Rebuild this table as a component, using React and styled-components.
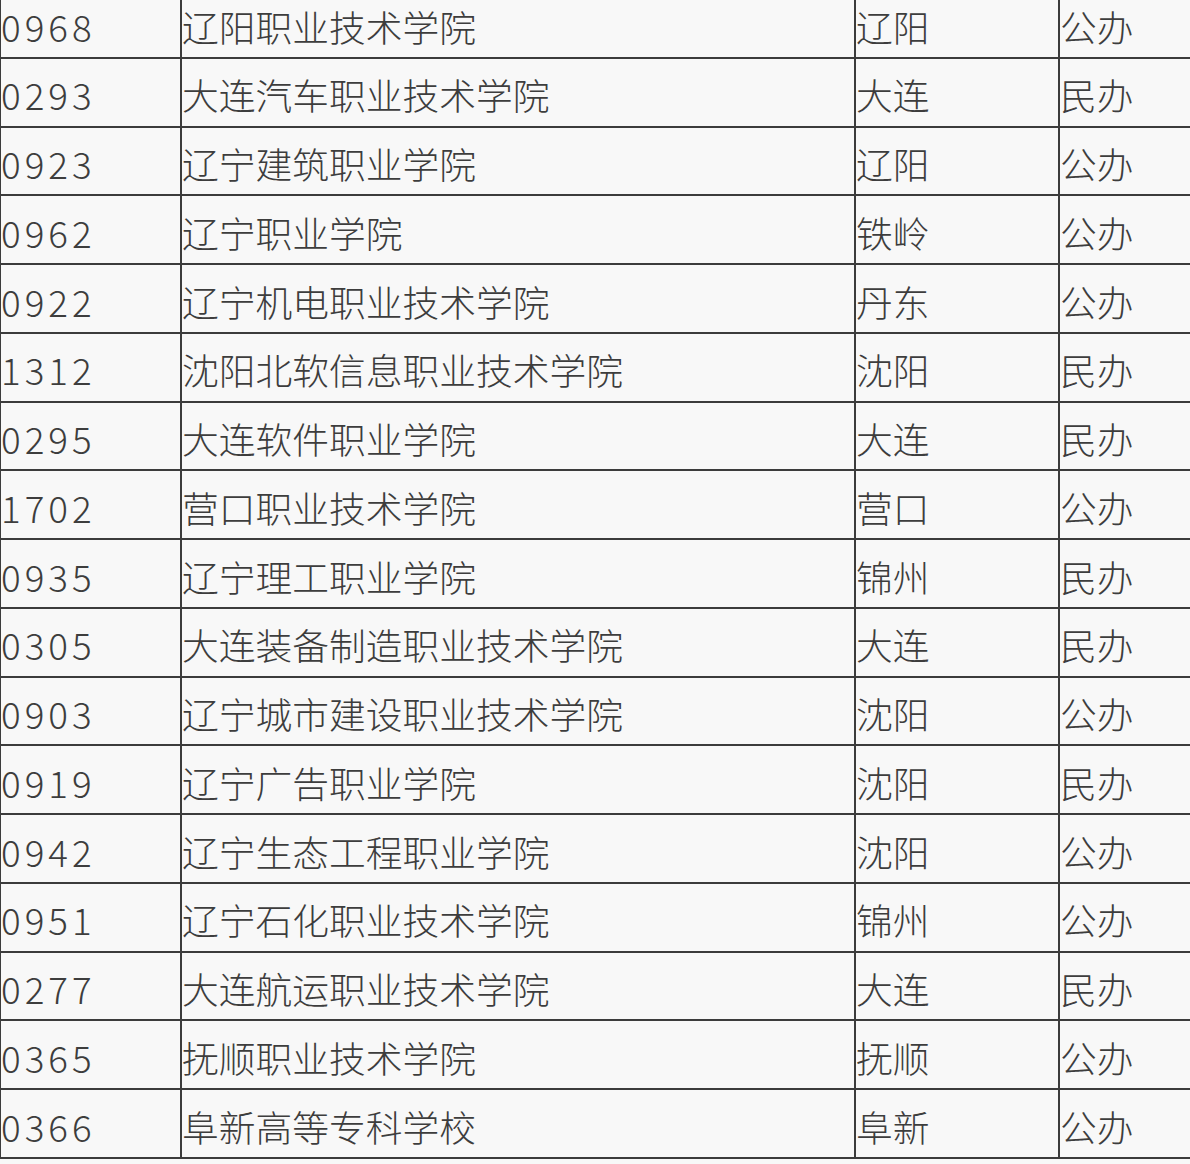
import React from 'react';
import styled, { createGlobalStyle } from 'styled-components';

const rows = [
  ['0968', '辽阳职业技术学院', '辽阳', '公办'],
  ['0293', '大连汽车职业技术学院', '大连', '民办'],
  ['0923', '辽宁建筑职业学院', '辽阳', '公办'],
  ['0962', '辽宁职业学院', '铁岭', '公办'],
  ['0922', '辽宁机电职业技术学院', '丹东', '公办'],
  ['1312', '沈阳北软信息职业技术学院', '沈阳', '民办'],
  ['0295', '大连软件职业学院', '大连', '民办'],
  ['1702', '营口职业技术学院', '营口', '公办'],
  ['0935', '辽宁理工职业学院', '锦州', '民办'],
  ['0305', '大连装备制造职业技术学院', '大连', '民办'],
  ['0903', '辽宁城市建设职业技术学院', '沈阳', '公办'],
  ['0919', '辽宁广告职业学院', '沈阳', '民办'],
  ['0942', '辽宁生态工程职业学院', '沈阳', '公办'],
  ['0951', '辽宁石化职业技术学院', '锦州', '公办'],
  ['0277', '大连航运职业技术学院', '大连', '民办'],
  ['0365', '抚顺职业技术学院', '抚顺', '公办'],
  ['0366', '阜新高等专科学校', '阜新', '公办'],
];

const GlobalStyle = createGlobalStyle`
  html, body {
    margin: 0;
    padding: 0;
    background: #f8f8f8;
    overflow: hidden;
  }
`;

// table is a crop of a bigger sheet, first row cut off at the top
const Table = styled.div`
  margin-top: -10px;
  width: 1190px;
  font-family: "Noto Sans CJK SC", "Noto Sans", sans-serif;
  font-weight: 300;
  color: #3d3d3d;
`;

const Row = styled.div`
  display: grid;
  grid-template-columns: 180px 674px 204px 1fr;
  height: 68.75px;
  box-sizing: border-box;
  border-bottom: 2px solid #3c3c3c;
`;

const Cell = styled.div`
  display: flex;
  align-items: center;
  box-sizing: border-box;
  padding-top: 5px;
  border-left: 2px solid #3c3c3c;
  font-size: 36.75px;
  line-height: 1;
  letter-spacing: ${p => (p.$num ? '4px' : '0')};
  white-space: nowrap;
  overflow: hidden;

  &:first-child {
    border-left-width: 1px;
  }
`;

export default function App() {
  return (
    <>
      <GlobalStyle />
      <Table>
        {rows.map(([code, name, city, type]) => (
          <Row key={code}>
            <Cell $num>{code}</Cell>
            <Cell>{name}</Cell>
            <Cell>{city}</Cell>
            <Cell>{type}</Cell>
          </Row>
        ))}
      </Table>
    </>
  );
}
